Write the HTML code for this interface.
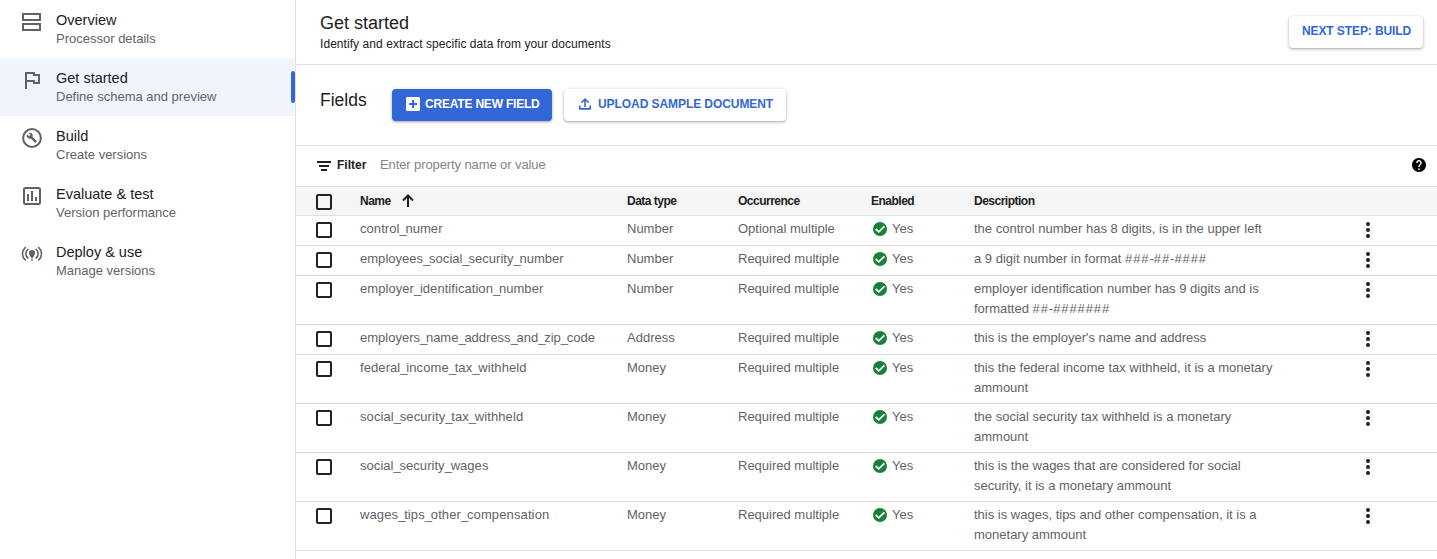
<!DOCTYPE html>
<html><head><meta charset="utf-8"><style>
html,body{margin:0;padding:0;width:1437px;height:559px;overflow:hidden;background:#fff;position:relative}
.t{position:absolute;white-space:nowrap;line-height:20px;font-family:"Liberation Sans",sans-serif}
.btn{position:absolute;border-radius:4px;box-sizing:border-box}
.btn.w{background:#fff;box-shadow:0 1px 2px rgba(60,64,67,.3),0 1px 3px 1px rgba(60,64,67,.15)}
.btn.b{background:#3367d6;box-shadow:0 1px 2px rgba(60,64,67,.3),0 1px 3px 1px rgba(60,64,67,.15)}
</style></head><body>
<div style="position:absolute;left:0px;top:58px;width:295px;height:58px;background:#f0f4fd"></div>
<div style="position:absolute;left:291px;top:71px;width:4px;height:32px;background:#3367d6;border-radius:3px"></div>
<div style="position:absolute;left:295px;top:0px;width:1px;height:559px;background:#e0e0e0"></div>
<div class="t" style="left:56px;top:9.98px;font-size:14.5px;font-weight:400;color:#202124;letter-spacing:0px;">Overview</div>
<div class="t" style="left:56px;top:28.50px;font-size:13px;font-weight:400;color:#5f6368;letter-spacing:0px;">Processor details</div>
<div class="t" style="left:56px;top:67.98px;font-size:14.5px;font-weight:400;color:#202124;letter-spacing:0px;">Get started</div>
<div class="t" style="left:56px;top:86.50px;font-size:13px;font-weight:400;color:#5f6368;letter-spacing:0px;">Define schema and preview</div>
<div class="t" style="left:56px;top:125.98px;font-size:14.5px;font-weight:400;color:#202124;letter-spacing:0px;">Build</div>
<div class="t" style="left:56px;top:144.50px;font-size:13px;font-weight:400;color:#5f6368;letter-spacing:0px;">Create versions</div>
<div class="t" style="left:56px;top:183.98px;font-size:14.5px;font-weight:400;color:#202124;letter-spacing:0px;">Evaluate &amp; test</div>
<div class="t" style="left:56px;top:202.50px;font-size:13px;font-weight:400;color:#5f6368;letter-spacing:0px;">Version performance</div>
<div class="t" style="left:56px;top:241.98px;font-size:14.5px;font-weight:400;color:#202124;letter-spacing:0px;">Deploy &amp; use</div>
<div class="t" style="left:56px;top:260.50px;font-size:13px;font-weight:400;color:#5f6368;letter-spacing:0px;">Manage versions</div>
<svg style="position:absolute;left:0;top:0" width="60" height="290" viewBox="0 0 60 290">
<g fill="none" stroke="#5f6368" stroke-width="2">
<rect x="23" y="14" width="17" height="6"/>
<rect x="23" y="24" width="17" height="6"/>
</g>
<g fill="#5f6368">
<rect x="25" y="72" width="2" height="17"/>
<rect x="25" y="72" width="10" height="2"/>
<rect x="33" y="72" width="2" height="4"/>
<rect x="33" y="74" width="7" height="2"/>
<rect x="38" y="74" width="2" height="10"/>
<rect x="33" y="82" width="7" height="2"/>
<rect x="33" y="80" width="2" height="4"/>
<rect x="25" y="80" width="10" height="2"/>
</g>
<circle cx="32" cy="138" r="8.9" fill="none" stroke="#5f6368" stroke-width="2"/>
<path transform="translate(26.3 132.2) scale(0.46)" d="M22.7 19l-9.1-9.1c.9-2.3.4-5-1.5-6.9-2-2-5-2.4-7.4-1.3L9 6 6 9 1.6 4.7C.4 7.1.9 10.1 2.9 12.1c1.9 1.9 4.6 2.4 6.9 1.5l9.1 9.1c.4.4 1 .4 1.4 0l2.3-2.3c.5-.4.5-1.1.1-1.4z" fill="#5f6368"/>
<rect x="24" y="188" width="16" height="16" rx="1.5" fill="none" stroke="#5f6368" stroke-width="2"/>
<rect x="27" y="194" width="2" height="7" fill="#5f6368"/>
<rect x="31" y="191" width="2" height="10" fill="#5f6368"/>
<rect x="35" y="197" width="2" height="4" fill="#5f6368"/>
<g fill="none" stroke="#5f6368" stroke-width="1.6" stroke-linecap="round">
<path d="M25.2 247.6 a8.5 8.5 0 0 0 0 12.4"/>
<path d="M27.9 249.4 a5.5 5.5 0 0 0 0 8.6"/>
<path d="M38.8 247.6 a8.5 8.5 0 0 1 0 12.4"/>
<path d="M36.1 249.4 a5.5 5.5 0 0 1 0 8.6"/>
</g>
<path d="M32 250 a3 3 0 0 1 3 3.2 c0 1.8 -1.6 3.3 -2.3 5 h-1.4 c-0.7 -1.7 -2.3 -3.2 -2.3 -5 a3 3 0 0 1 3 -3.2z" fill="#5f6368"/>
<rect x="31.2" y="259" width="1.6" height="1.6" fill="#5f6368"/>
</svg>
<div class="t" style="left:320px;top:12.76px;font-size:18px;font-weight:400;color:#202124;letter-spacing:0px;">Get started</div>
<div class="t" style="left:320px;top:33.84px;font-size:12px;font-weight:400;color:#202124;letter-spacing:0.06px;">Identify and extract specific data from your documents</div>
<div style="position:absolute;left:296px;top:64px;width:1141px;height:1px;background:#e0e0e0"></div>
<div class="btn w" style="left:1289px;top:16px;width:134px;height:32px;"></div>
<div class="t" style="left:1302px;top:20.84px;font-size:12px;font-weight:700;color:#3367d6;letter-spacing:-0.1px;">NEXT STEP: BUILD</div>
<div class="t" style="left:320px;top:89.94px;font-size:17.5px;font-weight:400;color:#202124;letter-spacing:0px;">Fields</div>
<div class="btn b" style="left:392px;top:89px;width:160px;height:32px;"></div>
<svg style="position:absolute;left:406px;top:97px" width="14" height="14" viewBox="0 0 14 14"><rect x="0" y="0" width="14" height="14" rx="1.2" fill="#fff"/><rect x="6" y="3" width="2" height="8" fill="#3367d6"/><rect x="3" y="6" width="8" height="2" fill="#3367d6"/></svg>
<div class="t" style="left:425px;top:93.84px;font-size:12px;font-weight:700;color:#fff;letter-spacing:-0.2px;">CREATE NEW FIELD</div>
<div class="btn w" style="left:564px;top:89px;width:222px;height:32px;"></div>
<svg style="position:absolute;left:578px;top:98px" width="14" height="13" viewBox="0 0 14 13"><path d="M1.8 8 v2.9 h10.4 v-2.9" fill="none" stroke="#3367d6" stroke-width="1.6" stroke-linecap="round" stroke-linejoin="round"/><path d="M7 8.4 V1.2 M3.8 4.2 L7 1 L10.2 4.2" fill="none" stroke="#3367d6" stroke-width="1.6" stroke-linecap="round" stroke-linejoin="round"/></svg>
<div class="t" style="left:598px;top:93.84px;font-size:12px;font-weight:700;color:#3367d6;letter-spacing:-0.07px;">UPLOAD SAMPLE DOCUMENT</div>
<div style="position:absolute;left:296px;top:145px;width:1141px;height:1px;background:#e0e0e0"></div>
<svg style="position:absolute;left:316px;top:160px" width="16" height="12" viewBox="0 0 16 12"><rect x="1" y="1" width="14" height="2" fill="#202124"/><rect x="3" y="5" width="10" height="2" fill="#202124"/><rect x="5" y="9" width="6" height="2" fill="#202124"/></svg>
<div class="t" style="left:337px;top:154.84px;font-size:12px;font-weight:700;color:#202124;letter-spacing:0px;">Filter</div>
<div class="t" style="left:380px;top:154.50px;font-size:13px;font-weight:400;color:#80868b;letter-spacing:-0.1px;">Enter property name or value</div>
<svg style="position:absolute;left:1411px;top:157px" width="16" height="16" viewBox="0 0 16 16"><path transform="translate(-0.4 -0.4) scale(0.7)" fill="#000" d="M12 2C6.48 2 2 6.48 2 12s4.48 10 10 10 10-4.48 10-10S17.52 2 12 2zm1 17h-2v-2h2v2zm2.07-7.75l-.9.92C13.45 12.9 13 13.5 13 15h-2v-.5c0-1.1.45-2.1 1.17-2.830l1.24-1.26c.37-.36.59-.86.59-1.41 0-1.1-.9-2-2-2s-2 .9-2 2H8c0-2.21 1.790-4 4-4s4 1.79 4 4c0 .88-.36 1.68-.93 2.25z"/></svg>
<div style="position:absolute;left:296px;top:186px;width:1141px;height:28px;background:#f5f5f5;border-top:1px solid #e0e0e0;border-bottom:1px solid #e0e0e0"></div>
<div style="position:absolute;left:316px;top:194px;width:12px;height:12px;border:2px solid #202124;border-radius:2px"></div>
<div class="t" style="left:360px;top:190.84px;font-size:12px;font-weight:700;color:#202124;letter-spacing:-0.5px;">Name</div>
<svg style="position:absolute;left:400px;top:193px" width="16" height="16" viewBox="0 0 16 16"><path d="M8 14 V3 M3 7.5 L8 2.5 L13 7.5" fill="none" stroke="#202124" stroke-width="2"/></svg>
<div class="t" style="left:627px;top:190.84px;font-size:12px;font-weight:700;color:#202124;letter-spacing:-0.5px;">Data type</div>
<div class="t" style="left:738px;top:190.84px;font-size:12px;font-weight:700;color:#202124;letter-spacing:-0.5px;">Occurrence</div>
<div class="t" style="left:871px;top:190.84px;font-size:12px;font-weight:700;color:#202124;letter-spacing:-0.5px;">Enabled</div>
<div class="t" style="left:974px;top:190.84px;font-size:12px;font-weight:700;color:#202124;letter-spacing:-0.5px;">Description</div>
<div style="position:absolute;left:316px;top:222px;width:12px;height:12px;border:2px solid #202124;border-radius:2px"></div>
<div class="t" style="left:360px;top:218.50px;font-size:13px;font-weight:400;color:#5f6368;letter-spacing:0.06px;">control<span style="letter-spacing:-1.3px">_</span>numer</div>
<div class="t" style="left:627px;top:218.50px;font-size:13px;font-weight:400;color:#5f6368;letter-spacing:0px;">Number</div>
<div class="t" style="left:738px;top:218.50px;font-size:13px;font-weight:400;color:#5f6368;letter-spacing:0px;">Optional multiple</div>
<svg style="position:absolute;left:872px;top:221px" width="16" height="16" viewBox="0 0 16 16"><circle cx="8" cy="8" r="7" fill="#188038"/><path d="M3.7 8 L6.8 10.8 L12.4 5.3" fill="none" stroke="#fff" stroke-width="1.8"/></svg>
<div class="t" style="left:892px;top:218.50px;font-size:13px;font-weight:400;color:#5f6368;letter-spacing:0px;">Yes</div>
<div class="t" style="left:974px;top:218.50px;font-size:13px;font-weight:400;color:#5f6368;letter-spacing:0px;">the control number has 8 digits, is in the upper left</div>
<svg style="position:absolute;left:1362px;top:221px" width="12" height="24" viewBox="0 0 12 24"><circle cx="6" cy="3" r="2" fill="#202124"/><circle cx="6" cy="9" r="2" fill="#202124"/><circle cx="6" cy="15" r="2" fill="#202124"/></svg>
<div style="position:absolute;left:296px;top:245px;width:1141px;height:1px;background:#e0e0e0"></div>
<div style="position:absolute;left:316px;top:252px;width:12px;height:12px;border:2px solid #202124;border-radius:2px"></div>
<div class="t" style="left:360px;top:248.50px;font-size:13px;font-weight:400;color:#5f6368;letter-spacing:0.03px;">employees<span style="letter-spacing:-1.3px">_</span>social<span style="letter-spacing:-1.3px">_</span>security<span style="letter-spacing:-1.3px">_</span>number</div>
<div class="t" style="left:627px;top:248.50px;font-size:13px;font-weight:400;color:#5f6368;letter-spacing:0px;">Number</div>
<div class="t" style="left:738px;top:248.50px;font-size:13px;font-weight:400;color:#5f6368;letter-spacing:0px;">Required multiple</div>
<svg style="position:absolute;left:872px;top:251px" width="16" height="16" viewBox="0 0 16 16"><circle cx="8" cy="8" r="7" fill="#188038"/><path d="M3.7 8 L6.8 10.8 L12.4 5.3" fill="none" stroke="#fff" stroke-width="1.8"/></svg>
<div class="t" style="left:892px;top:248.50px;font-size:13px;font-weight:400;color:#5f6368;letter-spacing:0px;">Yes</div>
<div class="t" style="left:974px;top:248.50px;font-size:13px;font-weight:400;color:#5f6368;letter-spacing:0px;">a 9 digit number in format <span style="letter-spacing:0.9px">#</span><span style="letter-spacing:0.9px">#</span><span style="letter-spacing:0.9px">#</span>-<span style="letter-spacing:0.9px">#</span><span style="letter-spacing:0.9px">#</span>-<span style="letter-spacing:0.9px">#</span><span style="letter-spacing:0.9px">#</span><span style="letter-spacing:0.9px">#</span><span style="letter-spacing:0.9px">#</span></div>
<svg style="position:absolute;left:1362px;top:251px" width="12" height="24" viewBox="0 0 12 24"><circle cx="6" cy="3" r="2" fill="#202124"/><circle cx="6" cy="9" r="2" fill="#202124"/><circle cx="6" cy="15" r="2" fill="#202124"/></svg>
<div style="position:absolute;left:296px;top:275px;width:1141px;height:1px;background:#e0e0e0"></div>
<div style="position:absolute;left:316px;top:282px;width:12px;height:12px;border:2px solid #202124;border-radius:2px"></div>
<div class="t" style="left:360px;top:278.50px;font-size:13px;font-weight:400;color:#5f6368;letter-spacing:0.057px;">employer<span style="letter-spacing:-1.3px">_</span>identification<span style="letter-spacing:-1.3px">_</span>number</div>
<div class="t" style="left:627px;top:278.50px;font-size:13px;font-weight:400;color:#5f6368;letter-spacing:0px;">Number</div>
<div class="t" style="left:738px;top:278.50px;font-size:13px;font-weight:400;color:#5f6368;letter-spacing:0px;">Required multiple</div>
<svg style="position:absolute;left:872px;top:281px" width="16" height="16" viewBox="0 0 16 16"><circle cx="8" cy="8" r="7" fill="#188038"/><path d="M3.7 8 L6.8 10.8 L12.4 5.3" fill="none" stroke="#fff" stroke-width="1.8"/></svg>
<div class="t" style="left:892px;top:278.50px;font-size:13px;font-weight:400;color:#5f6368;letter-spacing:0px;">Yes</div>
<div class="t" style="left:974px;top:278.50px;font-size:13px;font-weight:400;color:#5f6368;letter-spacing:0px;">employer identification number has 9 digits and is</div>
<div class="t" style="left:974px;top:298.50px;font-size:13px;font-weight:400;color:#5f6368;letter-spacing:0px;">formatted <span style="letter-spacing:0.9px">#</span><span style="letter-spacing:0.9px">#</span>-<span style="letter-spacing:0.9px">#</span><span style="letter-spacing:0.9px">#</span><span style="letter-spacing:0.9px">#</span><span style="letter-spacing:0.9px">#</span><span style="letter-spacing:0.9px">#</span><span style="letter-spacing:0.9px">#</span><span style="letter-spacing:0.9px">#</span></div>
<svg style="position:absolute;left:1362px;top:281px" width="12" height="24" viewBox="0 0 12 24"><circle cx="6" cy="3" r="2" fill="#202124"/><circle cx="6" cy="9" r="2" fill="#202124"/><circle cx="6" cy="15" r="2" fill="#202124"/></svg>
<div style="position:absolute;left:296px;top:324px;width:1141px;height:1px;background:#e0e0e0"></div>
<div style="position:absolute;left:316px;top:331px;width:12px;height:12px;border:2px solid #202124;border-radius:2px"></div>
<div class="t" style="left:360px;top:327.50px;font-size:13px;font-weight:400;color:#5f6368;letter-spacing:0px;">employers<span style="letter-spacing:-1.3px">_</span>name<span style="letter-spacing:-1.3px">_</span>address<span style="letter-spacing:-1.3px">_</span>and<span style="letter-spacing:-1.3px">_</span>zip<span style="letter-spacing:-1.3px">_</span>code</div>
<div class="t" style="left:627px;top:327.50px;font-size:13px;font-weight:400;color:#5f6368;letter-spacing:0px;">Address</div>
<div class="t" style="left:738px;top:327.50px;font-size:13px;font-weight:400;color:#5f6368;letter-spacing:0px;">Required multiple</div>
<svg style="position:absolute;left:872px;top:330px" width="16" height="16" viewBox="0 0 16 16"><circle cx="8" cy="8" r="7" fill="#188038"/><path d="M3.7 8 L6.8 10.8 L12.4 5.3" fill="none" stroke="#fff" stroke-width="1.8"/></svg>
<div class="t" style="left:892px;top:327.50px;font-size:13px;font-weight:400;color:#5f6368;letter-spacing:0px;">Yes</div>
<div class="t" style="left:974px;top:327.50px;font-size:13px;font-weight:400;color:#5f6368;letter-spacing:0px;">this is the employer's name and address</div>
<svg style="position:absolute;left:1362px;top:330px" width="12" height="24" viewBox="0 0 12 24"><circle cx="6" cy="3" r="2" fill="#202124"/><circle cx="6" cy="9" r="2" fill="#202124"/><circle cx="6" cy="15" r="2" fill="#202124"/></svg>
<div style="position:absolute;left:296px;top:354px;width:1141px;height:1px;background:#e0e0e0"></div>
<div style="position:absolute;left:316px;top:361px;width:12px;height:12px;border:2px solid #202124;border-radius:2px"></div>
<div class="t" style="left:360px;top:357.50px;font-size:13px;font-weight:400;color:#5f6368;letter-spacing:0.085px;">federal<span style="letter-spacing:-1.3px">_</span>income<span style="letter-spacing:-1.3px">_</span>tax<span style="letter-spacing:-1.3px">_</span>withheld</div>
<div class="t" style="left:627px;top:357.50px;font-size:13px;font-weight:400;color:#5f6368;letter-spacing:0px;">Money</div>
<div class="t" style="left:738px;top:357.50px;font-size:13px;font-weight:400;color:#5f6368;letter-spacing:0px;">Required multiple</div>
<svg style="position:absolute;left:872px;top:360px" width="16" height="16" viewBox="0 0 16 16"><circle cx="8" cy="8" r="7" fill="#188038"/><path d="M3.7 8 L6.8 10.8 L12.4 5.3" fill="none" stroke="#fff" stroke-width="1.8"/></svg>
<div class="t" style="left:892px;top:357.50px;font-size:13px;font-weight:400;color:#5f6368;letter-spacing:0px;">Yes</div>
<div class="t" style="left:974px;top:357.50px;font-size:13px;font-weight:400;color:#5f6368;letter-spacing:0px;">this the federal income tax withheld, it is a monetary</div>
<div class="t" style="left:974px;top:377.50px;font-size:13px;font-weight:400;color:#5f6368;letter-spacing:0px;">ammount</div>
<svg style="position:absolute;left:1362px;top:360px" width="12" height="24" viewBox="0 0 12 24"><circle cx="6" cy="3" r="2" fill="#202124"/><circle cx="6" cy="9" r="2" fill="#202124"/><circle cx="6" cy="15" r="2" fill="#202124"/></svg>
<div style="position:absolute;left:296px;top:403px;width:1141px;height:1px;background:#e0e0e0"></div>
<div style="position:absolute;left:316px;top:410px;width:12px;height:12px;border:2px solid #202124;border-radius:2px"></div>
<div class="t" style="left:360px;top:406.50px;font-size:13px;font-weight:400;color:#5f6368;letter-spacing:0.093px;">social<span style="letter-spacing:-1.3px">_</span>security<span style="letter-spacing:-1.3px">_</span>tax<span style="letter-spacing:-1.3px">_</span>withheld</div>
<div class="t" style="left:627px;top:406.50px;font-size:13px;font-weight:400;color:#5f6368;letter-spacing:0px;">Money</div>
<div class="t" style="left:738px;top:406.50px;font-size:13px;font-weight:400;color:#5f6368;letter-spacing:0px;">Required multiple</div>
<svg style="position:absolute;left:872px;top:409px" width="16" height="16" viewBox="0 0 16 16"><circle cx="8" cy="8" r="7" fill="#188038"/><path d="M3.7 8 L6.8 10.8 L12.4 5.3" fill="none" stroke="#fff" stroke-width="1.8"/></svg>
<div class="t" style="left:892px;top:406.50px;font-size:13px;font-weight:400;color:#5f6368;letter-spacing:0px;">Yes</div>
<div class="t" style="left:974px;top:406.50px;font-size:13px;font-weight:400;color:#5f6368;letter-spacing:0px;">the social security tax withheld is a monetary</div>
<div class="t" style="left:974px;top:426.50px;font-size:13px;font-weight:400;color:#5f6368;letter-spacing:0px;">ammount</div>
<svg style="position:absolute;left:1362px;top:409px" width="12" height="24" viewBox="0 0 12 24"><circle cx="6" cy="3" r="2" fill="#202124"/><circle cx="6" cy="9" r="2" fill="#202124"/><circle cx="6" cy="15" r="2" fill="#202124"/></svg>
<div style="position:absolute;left:296px;top:452px;width:1141px;height:1px;background:#e0e0e0"></div>
<div style="position:absolute;left:316px;top:459px;width:12px;height:12px;border:2px solid #202124;border-radius:2px"></div>
<div class="t" style="left:360px;top:455.50px;font-size:13px;font-weight:400;color:#5f6368;letter-spacing:0.05px;">social<span style="letter-spacing:-1.3px">_</span>security<span style="letter-spacing:-1.3px">_</span>wages</div>
<div class="t" style="left:627px;top:455.50px;font-size:13px;font-weight:400;color:#5f6368;letter-spacing:0px;">Money</div>
<div class="t" style="left:738px;top:455.50px;font-size:13px;font-weight:400;color:#5f6368;letter-spacing:0px;">Required multiple</div>
<svg style="position:absolute;left:872px;top:458px" width="16" height="16" viewBox="0 0 16 16"><circle cx="8" cy="8" r="7" fill="#188038"/><path d="M3.7 8 L6.8 10.8 L12.4 5.3" fill="none" stroke="#fff" stroke-width="1.8"/></svg>
<div class="t" style="left:892px;top:455.50px;font-size:13px;font-weight:400;color:#5f6368;letter-spacing:0px;">Yes</div>
<div class="t" style="left:974px;top:455.50px;font-size:13px;font-weight:400;color:#5f6368;letter-spacing:0px;">this is the wages that are considered for social</div>
<div class="t" style="left:974px;top:475.50px;font-size:13px;font-weight:400;color:#5f6368;letter-spacing:0px;">security, it is a monetary ammount</div>
<svg style="position:absolute;left:1362px;top:458px" width="12" height="24" viewBox="0 0 12 24"><circle cx="6" cy="3" r="2" fill="#202124"/><circle cx="6" cy="9" r="2" fill="#202124"/><circle cx="6" cy="15" r="2" fill="#202124"/></svg>
<div style="position:absolute;left:296px;top:501px;width:1141px;height:1px;background:#e0e0e0"></div>
<div style="position:absolute;left:316px;top:508px;width:12px;height:12px;border:2px solid #202124;border-radius:2px"></div>
<div class="t" style="left:360px;top:504.50px;font-size:13px;font-weight:400;color:#5f6368;letter-spacing:0.12px;">wages<span style="letter-spacing:-1.3px">_</span>tips<span style="letter-spacing:-1.3px">_</span>other<span style="letter-spacing:-1.3px">_</span>compensation</div>
<div class="t" style="left:627px;top:504.50px;font-size:13px;font-weight:400;color:#5f6368;letter-spacing:0px;">Money</div>
<div class="t" style="left:738px;top:504.50px;font-size:13px;font-weight:400;color:#5f6368;letter-spacing:0px;">Required multiple</div>
<svg style="position:absolute;left:872px;top:507px" width="16" height="16" viewBox="0 0 16 16"><circle cx="8" cy="8" r="7" fill="#188038"/><path d="M3.7 8 L6.8 10.8 L12.4 5.3" fill="none" stroke="#fff" stroke-width="1.8"/></svg>
<div class="t" style="left:892px;top:504.50px;font-size:13px;font-weight:400;color:#5f6368;letter-spacing:0px;">Yes</div>
<div class="t" style="left:974px;top:504.50px;font-size:13px;font-weight:400;color:#5f6368;letter-spacing:0px;">this is wages, tips and other compensation, it is a</div>
<div class="t" style="left:974px;top:524.50px;font-size:13px;font-weight:400;color:#5f6368;letter-spacing:0px;">monetary ammount</div>
<svg style="position:absolute;left:1362px;top:507px" width="12" height="24" viewBox="0 0 12 24"><circle cx="6" cy="3" r="2" fill="#202124"/><circle cx="6" cy="9" r="2" fill="#202124"/><circle cx="6" cy="15" r="2" fill="#202124"/></svg>
<div style="position:absolute;left:296px;top:550px;width:1141px;height:1px;background:#e0e0e0"></div>
</body></html>
